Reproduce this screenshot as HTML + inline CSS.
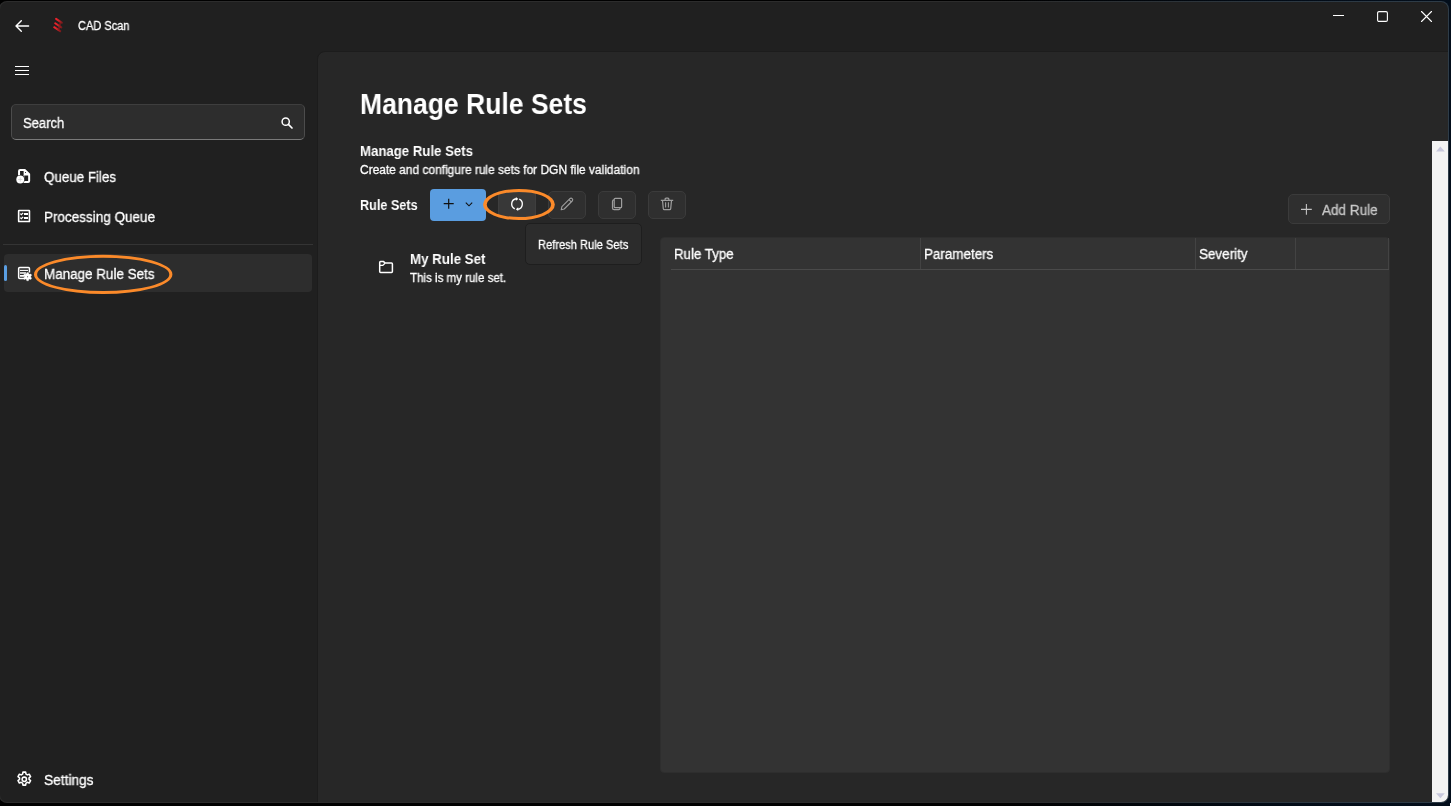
<!DOCTYPE html>
<html lang="en">
<head>
<meta charset="utf-8">
<title>CAD Scan</title>
<style>
*{box-sizing:border-box;margin:0;padding:0}
html,body{width:1451px;height:806px;overflow:hidden;background:#000}
body{background:linear-gradient(90deg,#000 0,#000 1000px,#020c18 1300px,#030e1b 1451px)}
body{font-family:"Liberation Sans",sans-serif;color:#fff;position:relative}
.abs{position:absolute}
.t{position:absolute;white-space:nowrap;line-height:1;transform-origin:0 50%;will-change:transform;-webkit-text-stroke:0.3px currentColor}
#win{position:absolute;left:-1px;top:1px;width:1450px;height:802px;background:linear-gradient(#202020,#202020) padding-box,linear-gradient(90deg,#2c2c2c 0,#2c2c2c 1000px,#2c3842 1300px,#2e3c48 1451px) border-box;border-radius:8px;border:1px solid transparent;overflow:hidden}
#content{position:absolute;left:317px;top:49px;width:1140px;height:760px;background:#272727;border-top-left-radius:8px;border:1px solid #1c1c1c}
.btn{position:absolute;background:#2f2f2f;border:1px solid #3b3b3b;border-radius:5px}
svg{position:absolute;overflow:visible}
</style>
</head>
<body>
<div id="win"><div id="content"></div><div class="abs" style="left:1432px;top:139px;width:16px;height:661px;background:#f3f3f3"></div></div>
<div class="abs" style="left:1450px;top:803px;width:1px;height:3px;background:#fff"></div>

<!-- title bar -->
<svg style="left:15px;top:20px" width="15" height="12" viewBox="0 0 15 12"><path d="M6.3 0.7 L1 6 L6.3 11.3 M1.2 6 H13.6" fill="none" stroke="#fff" stroke-width="1.4" stroke-linecap="round" stroke-linejoin="round"/></svg>
<svg style="left:46px;top:12px" width="24" height="24" viewBox="46 12 24 24"><defs><linearGradient id="lg" x1="0" y1="0" x2="1" y2="0"><stop offset="0" stop-color="#f2222c"/><stop offset="0.45" stop-color="#d02228"/><stop offset="1" stop-color="#7c1a1c"/></linearGradient></defs><g fill="none" stroke="url(#lg)" stroke-width="2" stroke-linecap="round"><path d="M56.1 18.9 L61.8 22.6"/><path d="M55.2 23.2 L61.3 27.4"/><path d="M54.2 27.2 L60.2 31.2"/></g><path d="M60.5 22.5 L58.5 30" stroke="#8a1c1e" stroke-width="1.6" fill="none" opacity="0.7"/></svg>
<div class="t" style="left:78px;top:20px;font-size:12px;transform:scaleX(0.917)">CAD Scan</div>

<div class="abs" style="left:1333px;top:15px;width:11px;height:1px;background:#fff"></div>
<svg style="left:1377px;top:11px" width="11" height="11" viewBox="0 0 11 11"><rect x="0.6" y="0.6" width="9.8" height="9.8" rx="1.4" fill="none" stroke="#fff" stroke-width="1.1"/></svg>
<svg style="left:1421px;top:11px" width="11" height="11" viewBox="0 0 11 11"><path d="M0.5 0.5 L10.5 10.5 M10.5 0.5 L0.5 10.5" stroke="#fff" stroke-width="1.1" stroke-linecap="round"/></svg>

<!-- hamburger -->
<div class="abs" style="left:15px;top:66px;width:14px;height:1px;background:#fff"></div><div class="abs" style="left:15px;top:70px;width:14px;height:1px;background:#fff"></div><div class="abs" style="left:15px;top:74px;width:14px;height:1px;background:#fff"></div>

<!-- search -->
<div class="abs" style="left:11px;top:104px;width:294px;height:36px;background:#2d2d2d;border:1px solid #4c4c4c;border-top-color:#3e3e3e;border-bottom-color:#7a7a7a;border-radius:5px"></div>
<div class="t" style="left:23px;top:116px;font-size:14px;transform:scaleX(0.931)">Search</div>
<svg style="left:281px;top:117px" width="12" height="12" viewBox="0 0 12 12"><circle cx="4.7" cy="4.7" r="3.6" fill="none" stroke="#fff" stroke-width="1.5"/><path d="M7.4 7.4 L11 11" stroke="#fff" stroke-width="1.7" stroke-linecap="round"/></svg>

<!-- nav -->
<div class="t" style="left:44px;top:170px;font-size:14px;transform:scaleX(0.954)">Queue Files</div>
<div class="t" style="left:44px;top:210px;font-size:14px;transform:scaleX(0.9636)">Processing Queue</div>
<div class="abs" style="left:3px;top:244px;width:310px;height:1px;background:#343434"></div>
<div class="abs" style="left:4px;top:254px;width:308px;height:38px;background:#2d2d2d;border-radius:4px"></div>
<div class="abs" style="left:4px;top:265px;width:3px;height:16px;background:#5a9ee2;border-radius:2px"></div>
<div class="t" style="left:44px;top:267px;font-size:14px;transform:scaleX(0.959)">Manage Rule Sets</div>
<svg style="left:0;top:0" width="1451" height="806"><path fill-rule="evenodd" fill="#fb8a2a" d="M34.00 274.4 A69.2 19.7 0 1 0 172.40 274.4 A69.2 19.7 0 1 0 34.00 274.4 Z M37.10 274.4 A66.1 16.6 0 1 0 169.30 274.4 A66.1 16.6 0 1 0 37.10 274.4 Z"/></svg>
<div class="t" style="left:44px;top:773px;font-size:14px;transform:scaleX(0.98)">Settings</div>

<!-- heading -->
<div class="t" style="left:360px;top:90px;font-size:29px;font-weight:bold;-webkit-text-stroke:0;transform:scaleX(0.914)">Manage Rule Sets</div>
<div class="t" style="left:360px;top:144px;font-size:14px;font-weight:bold;-webkit-text-stroke:0;transform:scaleX(0.943)">Manage Rule Sets</div>
<div class="t" style="left:360px;top:164px;font-size:12px;transform:scaleX(0.995)">Create and configure rule sets for DGN file validation</div>
<div class="t" style="left:360px;top:198px;font-size:14px;font-weight:bold;-webkit-text-stroke:0;transform:scaleX(0.903)">Rule Sets</div>

<!-- toolbar -->
<div class="abs" style="left:430px;top:189px;width:56px;height:32px;background:#5a9de0;border-radius:4px"></div>
<div class="btn" style="left:498px;top:192px;width:38px;height:25px;background:#383838;border-color:#3e3e3e;border-radius:0"></div>
<div class="btn" style="left:548px;top:191px;width:38px;height:28px"></div>
<div class="btn" style="left:598px;top:191px;width:38px;height:28px"></div>
<div class="btn" style="left:648px;top:191px;width:38px;height:28px"></div>
<svg style="left:0;top:0" width="1451" height="806"><path fill-rule="evenodd" fill="#fb8a2a" d="M483.05 204.5 A35.9 15.6 0 1 0 554.85 204.5 A35.9 15.6 0 1 0 483.05 204.5 Z M486.75 204.5 A32.2 12.6 0 1 0 551.15 204.5 A32.2 12.6 0 1 0 486.75 204.5 Z"/></svg>

<!-- tooltip -->
<div class="abs" style="left:525px;top:223px;width:117px;height:42px;background:#2c2c2c;border:1px solid #1e1e1e;border-radius:5px"></div>
<div class="t" style="left:538px;top:239px;font-size:12px;transform:scaleX(0.927)">Refresh Rule Sets</div>

<!-- add rule -->
<div class="btn" style="left:1288px;top:194px;width:102px;height:30px"></div>
<div class="t" style="left:1322px;top:203px;font-size:14px;color:#c8c8c8;transform:scaleX(0.967)">Add Rule</div>

<!-- list -->
<div class="t" style="left:410px;top:252px;font-size:14px;font-weight:bold;-webkit-text-stroke:0;transform:scaleX(0.95)">My Rule Set</div>
<div class="t" style="left:410px;top:272px;font-size:12px;transform:scaleX(0.9617)">This is my rule set.</div>

<!-- grid -->
<div class="abs" style="left:660px;top:237px;width:730px;height:536px;background:#333333;border-radius:4px;border:1px solid #2e2e2e"></div>
<div class="abs" style="left:671px;top:269px;width:718px;height:1px;background:#4a4a4a"></div>
<div class="abs" style="left:920px;top:238px;width:1px;height:31px;background:#434343"></div>
<div class="abs" style="left:1195px;top:238px;width:1px;height:31px;background:#434343"></div>
<div class="abs" style="left:1295px;top:238px;width:1px;height:31px;background:#434343"></div>
<div class="abs" style="left:1388px;top:238px;width:1px;height:31px;background:#434343"></div>
<div class="t" style="left:674px;top:247px;font-size:14px;transform:scaleX(0.949)">Rule Type</div>
<div class="t" style="left:924px;top:247px;font-size:14px;transform:scaleX(0.958)">Parameters</div>
<div class="t" style="left:1199px;top:247px;font-size:14px;transform:scaleX(0.961)">Severity</div>

<!-- scrollbar -->

<!-- nav icons -->
<svg style="left:14px;top:164px" width="22" height="24" viewBox="14 164 22 24"><path d="M19.05 177 V171 Q19.05 169.95 20.1 169.95 H24.7 L29.15 174.3 V180.9 Q29.15 181.95 28.1 181.95 H23" fill="none" stroke="#fff" stroke-width="2" stroke-linejoin="round"/><path d="M23.65 169.6 H25 L29.6 174.2 V175.5 H23.65 Z" fill="#fff"/><path d="M23.95 175 V181.2" stroke="#fff" stroke-width="0.6"/><circle cx="25.5" cy="172.5" r="0.55" fill="#202020"/><circle cx="20.25" cy="179.5" r="4.6" fill="#202020"/><circle cx="20.25" cy="179.5" r="3.95" fill="#fff"/><path d="M20.25 177.4 V181.6 M18.15 179.5 H22.35" stroke="#cfcfcf" stroke-width="0.8"/></svg>
<svg style="left:14px;top:205px" width="22" height="24" viewBox="14 205 22 24"><rect x="18.65" y="210.55" width="10.8" height="11" rx="0.4" fill="none" stroke="#fff" stroke-width="1.6"/><path d="M20.3 213.6 L21.4 214.7 L23.2 212.9 M20.3 217.6 L21.4 218.7 L23.2 216.9" fill="none" stroke="#fff" stroke-width="1.3"/><path d="M24 214 H28 M24 218 H28" stroke="#fff" stroke-width="1.8"/></svg>
<svg style="left:14px;top:262px" width="22" height="24" viewBox="14 262 22 24"><path d="M29.45 272.5 V268.6 Q29.45 267.55 28.4 267.55 H19.7 Q18.65 267.55 18.65 268.6 V277.5 Q18.65 278.55 19.7 278.55 H25" fill="none" stroke="#fff" stroke-width="1.5"/><path d="M20 270.4 H28" stroke="#fff" stroke-width="1.1"/><path d="M20 272.95 H26 M20 275.85 H24.4" stroke="#fff" stroke-width="1.6"/><g transform="translate(27.6 276.7)"><path d="M-0.8 -4.1 H0.8 L1.2 -2.9 L2.1 -2.4 L3.3 -2.8 L4.1 -1.4 L3.2 -0.5 V0.5 L4.1 1.4 L3.3 2.8 L2.1 2.4 L1.2 2.9 L0.8 4.1 H-0.8 L-1.2 2.9 L-2.1 2.4 L-3.3 2.8 L-4.1 1.4 L-3.2 0.5 V-0.5 L-4.1 -1.4 L-3.3 -2.8 L-2.1 -2.4 L-1.2 -2.9 Z" fill="#fff" stroke="#fff" stroke-width="0.3"/><circle cx="0" cy="0" r="0.55" fill="#2d2d2d"/></g></svg>
<svg style="left:15.7px;top:770.7px" width="16.6" height="16.6" viewBox="0 0 16 16"><path d="M6.7 1.1 h2.6 l0.35 1.9 l1.3 0.75 l1.8 -0.65 l1.3 2.25 l-1.45 1.25 v1.5 l1.45 1.25 l-1.3 2.25 l-1.8 -0.65 l-1.3 0.75 l-0.35 1.9 h-2.6 l-0.35 -1.9 l-1.3 -0.75 l-1.8 0.65 l-1.3 -2.25 l1.45 -1.25 v-1.5 l-1.45 -1.25 l1.3 -2.25 l1.8 0.65 l1.3 -0.75 z" fill="none" stroke="#fff" stroke-width="1.5" stroke-linejoin="round"/><circle cx="8" cy="8" r="2.1" fill="none" stroke="#fff" stroke-width="1.5"/></svg>

<!-- folder -->
<svg style="left:378px;top:260px" width="16" height="14" viewBox="0 0 16 14"><path d="M1.7 2.5 Q1.7 1.6 2.6 1.6 H5.6 L7.2 3.1 H13.5 Q14.4 3.1 14.4 4 V11.5 Q14.4 12.4 13.5 12.4 H2.6 Q1.7 12.4 1.7 11.5 Z" fill="none" stroke="#fff" stroke-width="1.5" stroke-linejoin="round"/><path d="M1.9 5.4 H4.8 L7 3.3" fill="none" stroke="#fff" stroke-width="1.3"/></svg>

<!-- toolbar icons -->
<svg style="left:443px;top:198px" width="32" height="12" viewBox="0 0 32 12"><path d="M5.7 0.7 V10.7 M0.7 5.7 H10.7" stroke="#111" stroke-width="1.2"/><path d="M22.8 4.6 L26 7.8 L29.2 4.6" fill="none" stroke="#111" stroke-width="1.1"/></svg>
<svg style="left:505px;top:192px" width="24" height="24" viewBox="505 192 24 24"><path d="M514.76 208.8 A5.3 5.3 0 0 1 516.26 198.75" fill="none" stroke="#fff" stroke-width="1.35"/><path d="M519.24 199.2 A5.3 5.3 0 0 1 517.74 209.25" fill="none" stroke="#fff" stroke-width="1.35"/><path d="M515.9 197 L518.3 199 L515.9 200.8 Z" fill="#fff"/><path d="M518.2 207.3 L515.8 209.2 L518.2 211 Z" fill="#fff"/></svg>
<svg style="left:560px;top:197px" width="14" height="14" viewBox="0 0 14 14"><path d="M1.2 12.8 L1.9 9.7 L9.9 1.7 A1.55 1.55 0 0 1 12.2 4 L4.2 12 Z M9 2.7 L11.2 4.9" fill="none" stroke="#9e9e9e" stroke-width="1.1" stroke-linejoin="round"/></svg>
<svg style="left:611px;top:197px" width="12" height="14" viewBox="0 0 12 14"><rect x="3.2" y="1.3" width="7.4" height="9.4" rx="1" fill="none" stroke="#9e9e9e" stroke-width="1.2"/><path d="M3 2.9 Q1.5 3 1.5 4.4 V11 Q1.5 12.6 3.1 12.6 H7.6 Q9 12.6 9.2 11.2" fill="none" stroke="#9e9e9e" stroke-width="1.2"/></svg>
<svg style="left:660px;top:197px" width="14" height="14" viewBox="0 0 14 14"><path d="M0.8 3.3 H13.2 M5.1 3.1 V2.2 Q5.1 1.2 6.1 1.2 H7.9 Q8.9 1.2 8.9 2.2 V3.1 M2.5 3.5 L3.3 11.7 Q3.4 12.7 4.4 12.7 H9.6 Q10.6 12.7 10.7 11.7 L11.5 3.5" fill="none" stroke="#9e9e9e" stroke-width="1.2"/><path d="M5.6 5.2 V10.6 M8.4 5.2 V10.6" stroke="#9e9e9e" stroke-width="1.1"/></svg>
<svg style="left:1300px;top:203px" width="13" height="13" viewBox="0 0 13 13"><path d="M6.4 1 V11.8 M1 6.4 H11.8" stroke="#c4c4c4" stroke-width="1.1"/></svg>

<!-- scrollbar arrows -->
<svg style="left:1436px;top:146px" width="9" height="6" viewBox="0 0 9 6"><path d="M0 5.5 L4.4 0.5 L8.8 5.5 Z" fill="#c8c8dc"/></svg>
<svg style="left:1436px;top:793px" width="9" height="6" viewBox="0 0 9 6"><path d="M0 0.3 L8.8 0.3 L4.4 5.3 Z" fill="#c8c8dc"/></svg>



</body>
</html>
